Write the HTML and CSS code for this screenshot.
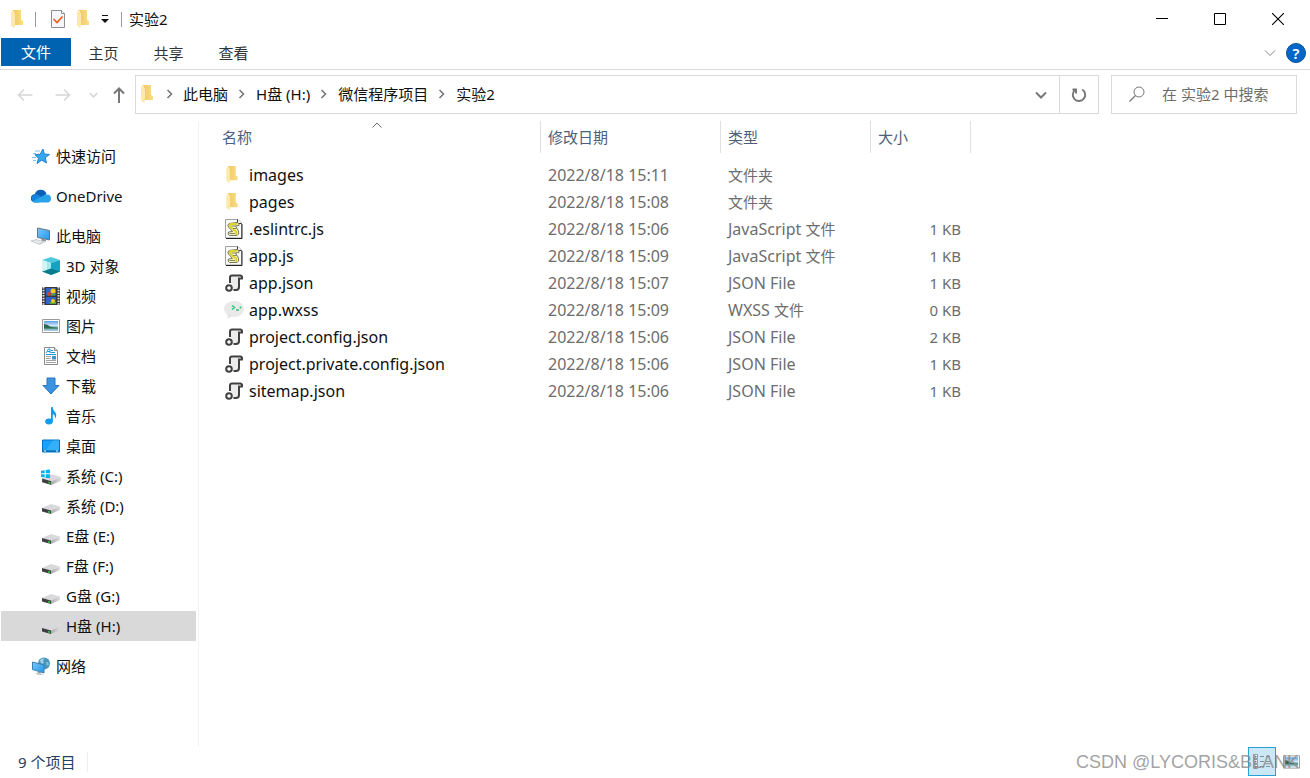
FILE: index.html
```html
<!DOCTYPE html>
<html lang="zh-CN">
<head>
<meta charset="utf-8">
<title>实验2</title>
<link rel="stylesheet" href="styles.css">
</head>
<body>
<svg class="sprite" aria-hidden="true">
  <defs>
    <linearGradient id="gFolder" x1="0" x2="1"><stop offset="0" stop-color="#f0c75f"/><stop offset="1" stop-color="#f9dc8a"/></linearGradient>
    <linearGradient id="gSky" x1="0" y1="0" x2="0" y2="1"><stop offset="0" stop-color="#5a9ee0"/><stop offset=".5" stop-color="#dceefb"/><stop offset=".6" stop-color="#5f9c94"/><stop offset="1" stop-color="#a9cfe6"/></linearGradient>
    <linearGradient id="gScreen" x1="0" y1="0" x2="1" y2="1"><stop offset="0" stop-color="#7cc8ff"/><stop offset="1" stop-color="#1f97ea"/></linearGradient>
    <linearGradient id="gDrive" x1="0" x2="1"><stop offset="0" stop-color="#a9abae"/><stop offset="1" stop-color="#dcdcde"/></linearGradient>
  </defs>
  <symbol id="folder" viewBox="0 0 12 18">
    <path d="M1 0H10V10L12 11V15H3V2Z" fill="url(#gFolder)"/>
    <path d="M0 1L3 2.600Q4 3 4 4V15Q4 17 3 18L0 15.500Z" fill="#ffe9a6"/>
  </symbol>
  <symbol id="check" viewBox="0 0 14 18">
    <path d="M.5.500H10.500L13.500 3.500V17.500H.5Z" fill="#f4f6f9" stroke="#8e8e8e"/>
    <path d="M10.500.500V3.500H13.500" fill="#fff" stroke="#8e8e8e"/>
    <path d="M2.500 9L6 12.500L11.500 6.500" fill="none" stroke="#f05a1a" stroke-width="1.700"/>
  </symbol>
  <symbol id="chev-r" viewBox="0 0 7 10"><path d="M1.500 1L5.500 5L1.500 9" fill="none" stroke="#777" stroke-width="1.600"/></symbol>
  <symbol id="chev-d" viewBox="0 0 12 8"><path d="M1 1.500L6 6.500L11 1.500" fill="none" stroke="currentColor" stroke-width="var(--w,1)"/></symbol>
  <symbol id="arrow" viewBox="0 0 16 14"><path d="M15.500 7H1.500M7 1.500L1.500 7L7 12.500" fill="none" stroke="currentColor" stroke-width="1.500"/></symbol>
  <symbol id="star" viewBox="0 0 18 18">
    <path d="M11 2L12.300 7L17.500 7.500L13.300 10.700L14.500 16L9.800 13.200L5 16.500L6.500 11.300L3 7.700L8.200 7.200Z" fill="#35a7f0" stroke="#1878c4" stroke-width=".9"/>
    <path d="M3 4H8M1 6.500H4M0 10.500H4M1 13.500H4" stroke="#7fc3ee" stroke-width="1"/>
  </symbol>
  <symbol id="cloud" viewBox="0 0 20 14">
    <path d="M4 13.500A4 4 0 0 1 3.800 5.200A6.200 6.200 0 0 1 15.500 4.800L11 9Z" fill="#0a5fb8"/>
    <path d="M4 13.500A4.200 4.200 0 1 1 6.500 5.500L12.500 9L8 13.500Z" fill="#1483dd"/>
    <path d="M4 13.500Q2.500 13.500 1.500 12.500L12.500 6.500A4.500 4.500 0 0 1 16 5.500A4 4 0 0 1 16 13.500Z" fill="#28a3ea"/>
  </symbol>
  <symbol id="pc" viewBox="0 0 20 18">
    <path d="M6.500 1L18.500 3.500V13L6.500 10.500Z" fill="url(#gScreen)" stroke="#667785"/>
    <path d="M11 11.500L15 12.500V14.500L10 13.500Z" fill="#8b949b"/>
    <path d="M0 14L5 12.500L13.500 15L8.500 17.500Z" fill="#d5d9dd" stroke="#a9afb5" stroke-width=".5"/>
    <path d="M2.500 14L9 16M5 13.500L11 15.200" stroke="#fff" stroke-width=".6"/>
  </symbol>
  <symbol id="cube" viewBox="0 0 18 18">
    <path d="M9 0L18 3L9 6L0 3Z" fill="#4cc9dc"/><path d="M0 3L9 6V18L0 14.500Z" fill="#a9e8ed"/><path d="M18 3L9 6V18L18 14.500Z" fill="#12a2c2"/>
    <path d="M0 14.500L9 11.500L18 14.500L9 18Z" fill="#087b8d"/><path d="M0 3L5 4.700V12.800L0 14.500Z" fill="#d1f4f4"/>
  </symbol>
  <symbol id="video" viewBox="0 0 18 18">
    <path d="M0 0H18V18H0Z" fill="#383838"/><path d="M1.500 0V18M16.500 0V18" stroke="#e2e2e2" stroke-width="2" stroke-dasharray="1.500 1.200"/>
    <path d="M4 1H14V8.500H4ZM4 10H14V17H4Z" fill="#3162c8"/><circle cx="11" cy="4" r="2.500" fill="#f6c71c"/><circle cx="7" cy="7" r="2" fill="#d64425"/><path d="M9 7H13V8.500H9ZM7 15H14V17H8Z" fill="#54a636"/><circle cx="11" cy="14" r="2" fill="#f6c71c"/>
  </symbol>
  <symbol id="picture" viewBox="0 0 18 14">
    <path d="M.5.500H17.500V13.500H.5Z" fill="#fff" stroke="#9b9b9b"/><path d="M2 2H16V12H2Z" fill="url(#gSky)"/><path d="M2 5Q5 5 9 8L16 9V9.500H2Z" fill="#2c6b52"/>
  </symbol>
  <symbol id="doc" viewBox="0 0 14 18">
    <path d="M.5.500H10.500L13.500 3.500V17.500H.5Z" fill="#fff" stroke="#8b8b8b"/><path d="M10.500.500V3.500H13.500" fill="#ddd" stroke="#8b8b8b"/>
    <path d="M2 6L4.500 2H6V6M3.500 4.500H6M7 3.500H9M7 5.500H11" stroke="#1996da" fill="none"/><path d="M2 7.500H12" stroke="#1996da"/><path d="M2 9.500H7M2 11.500H7M2 13.500H12M2 15.500H12" stroke="#a2a2a2"/><path d="M8 9H12V12.500H8Z" fill="#3b91ca"/>
  </symbol>
  <symbol id="download" viewBox="0 0 18 18"><path d="M5 1H13V8.500H17L9 17L1 8.500H5Z" fill="#3b93e2" stroke="#2878c3"/></symbol>
  <symbol id="music" viewBox="0 0 12 18">
    <ellipse cx="4" cy="14.500" rx="3.800" ry="3" fill="#0c9cf0"/><path d="M6 0H7.500Q8 3 10 5Q12.500 7.500 10 12Q10.500 8 7.800 7V14.500H6Z" fill="#0c9cf0"/>
  </symbol>
  <symbol id="desktop" viewBox="0 0 18 13">
    <path d="M.5.500H17.500V12.500H.5Z" fill="#18a1f7" stroke="#0873bd"/><path d="M11 1H17V10.500H4Z" fill="#35aff9"/><path d="M1 11H17V12H1Z" fill="#075e9e"/><path d="M2 11.500H4M14 11.500H16" stroke="#fff"/>
  </symbol>
  <symbol id="drive" viewBox="0 0 18 10">
    <path d="M0 4L9 0L18 2.500L9 6.500Z" fill="#d9d9dc"/><path d="M0 4L9 6.500V10L0 7.500Z" fill="#3d3f40"/><path d="M18 2.500L9 6.500V10L18 6Z" fill="url(#gDrive)"/><path d="M6 7L8 7.600V9L6 8.400Z" fill="#35d03f"/>
  </symbol>
  <symbol id="windrive" viewBox="0 0 19 15">
    <use href="#drive" x="1" y="5" width="18" height="10"/>
    <path d="M0 1.500L3.500 1V4H0ZM4.500.900L8.500.300V4H4.500ZM0 5H3.500V8L0 7.500ZM4.500 5H8.500V8.700L4.500 8.100Z" fill="#00b0ef"/>
  </symbol>
  <symbol id="network" viewBox="0 0 18 18">
    <circle cx="12" cy="6.500" r="6" fill="#4796bd"/><path d="M8 3Q10 1 12.500 1.500L11 4L12 6L9 6.500Z" fill="#a4d3e6"/><path d="M14.500 4.500L16.500 5.500V8.500L14.500 8Z" fill="#8cc3db"/>
    <path d="M.5 5L12 8V16L.5 12.500Z" fill="url(#gScreen)" stroke="#3c81ad"/><path d="M6 14.500L9 15.500V17H5Z" fill="#8f999e"/><path d="M3 16.500L8 16L12 18H6Z" fill="#c9cdd0"/>
  </symbol>
  <symbol id="js" viewBox="0 0 18 20">
    <path d="M.5.500H13L16.500 4V19H.5Z" fill="#fafafa" stroke="#a0a0a0"/><path d="M1 19.500H17V5" fill="none" stroke="#222"/><path d="M12.500.500V4.500H16.500" fill="#fff" stroke="#333"/>
    <path d="M4 4.500L12 3.500Q15 4 14 6.500L10.500 7L13.500 12Q14.500 15.500 12 16.500H4.500Q2 15.500 3.500 13L7.500 12.500L3.500 8Q2 6 4 4.500Z" fill="#f3f0bd" stroke="#77775c" stroke-width="1"/>
    <path d="M12 5H5.500Q4 6.500 6 8.500L11 12.500Q12 14.500 10.500 15.500" fill="none" stroke="#dcd52e" stroke-width="2"/>
    <path d="M6.500 7H10.500M8 9.500H11.500M4.500 14.500H10" stroke="#6d6d52" stroke-width=".8"/>
  </symbol>
  <symbol id="json" viewBox="0 0 18 18">
    <path d="M5 9V3.500Q5 1.500 7 1.500H14V13Q14 16 11 16H6V9Z" fill="#ececec"/>
    <path d="M5 9V3.500Q5 1.500 7 1.500H15.500Q17.500 2 17 4.500H14V13Q14 16 11 16H8.500" fill="none" stroke="#414141" stroke-width="2"/>
    <circle cx="4" cy="14" r="2.800" fill="#fff" stroke="#414141" stroke-width="2"/>
  </symbol>
  <symbol id="wxss" viewBox="0 0 20 18">
    <ellipse cx="10" cy="8" rx="10" ry="8" fill="#e9e9e9"/><path d="M4 13L3.500 17.500L8 15Z" fill="#e1e1e1"/>
    <path d="M8 4.500L10.500 6.500L8 8.500M12 9H15M16.500 5.500V7.500" fill="none" stroke="#2ac47a" stroke-width="1.500"/>
  </symbol>
  <symbol id="details" viewBox="0 0 18 16">
    <path d="M.5.500H4.500V4.500H.5ZM.5 5.500H4.500V9.500H.5ZM.5 10.500H4.500V14.500H.5Z" fill="#fff" stroke="#8e9ba3"/>
    <path d="M2 2H3.500V3.500H2Z" fill="#2577b5"/><path d="M2 7H3.500V8.500H2Z" fill="#be6a2c"/><path d="M2 12H3.500V13.500H2Z" fill="#a11"/>
    <path d="M7 2.500H11M13 2.500H17M7 7.500H11M13 7.500H17M7 12.500H11M13 12.500H17" stroke="#7f919c"/>
  </symbol>
</svg>

<header class="titlebar">
  <div class="quick-tools">
    <svg class="i-folder"><use href="#folder"/></svg>
    <span class="divider"></span>
    <button class="plain" aria-label="属性"><svg class="i-page"><use href="#check"/></svg></button>
    <button class="plain" aria-label="新建文件夹"><svg class="i-folder"><use href="#folder"/></svg></button>
    <button class="plain" aria-label="自定义快速访问工具栏"><svg class="i-more" viewBox="0 0 8 8"><path d="M1 .500H7" stroke="#111"/><path d="M0 4H8L4 8Z" fill="#111"/></svg></button>
    <span class="divider"></span>
  </div>
  <h1 class="title">实验2</h1>
  <div class="window-buttons">
    <button class="plain window-button" aria-label="最小化"><svg class="i-win" viewBox="0 0 12 12"><path d="M0 5.500H12" stroke="#000"/></svg></button>
    <button class="plain window-button" aria-label="最大化"><svg class="i-win" viewBox="0 0 12 12"><path d="M.5.500H11.500V11.500H.5Z" fill="none" stroke="#000"/></svg></button>
    <button class="plain window-button" aria-label="关闭"><svg class="i-win" viewBox="0 0 12 12"><path d="M0 0L12 12M12 0L0 12" stroke="#000" stroke-width="1.100"/></svg></button>
  </div>
</header>

<nav class="ribbon" aria-label="功能区">
  <button class="tab tab-file">文件</button>
  <button class="tab">主页</button>
  <button class="tab">共享</button>
  <button class="tab">查看</button>
  <div class="ribbon-end">
    <button class="plain expand" aria-label="展开功能区"><svg class="i-chev"><use href="#chev-d"/></svg></button>
    <button class="plain help" aria-label="帮助">?</button>
  </div>
</nav>

<div class="navbar">
  <div class="history">
    <button class="plain faint" aria-label="后退"><svg class="i-arrow"><use href="#arrow"/></svg></button>
    <button class="plain faint" aria-label="前进"><svg class="i-arrow i-forward"><use href="#arrow"/></svg></button>
    <button class="plain faint" aria-label="最近位置"><svg class="i-recent"><use href="#chev-d"/></svg></button>
    <button class="plain up" aria-label="上移"><svg class="i-up" viewBox="0 0 12 16"><path d="M6 16V1.500M1 6.500L6 1.500L11 6.500" fill="none" stroke="currentColor" stroke-width="2"/></svg></button>
  </div>
  <div class="address">
    <div class="crumbs">
      <svg class="i-folder"><use href="#folder"/></svg>
      <svg class="i-crumb"><use href="#chev-r"/></svg>
      <button class="plain">此电脑</button>
      <svg class="i-crumb"><use href="#chev-r"/></svg>
      <button class="plain">H盘 (H:)</button>
      <svg class="i-crumb"><use href="#chev-r"/></svg>
      <button class="plain">微信程序项目</button>
      <svg class="i-crumb"><use href="#chev-r"/></svg>
      <button class="plain">实验2</button>
    </div>
    <button class="plain address-drop" aria-label="以前的位置"><svg class="i-chev"><use href="#chev-d"/></svg></button>
    <button class="plain refresh" aria-label="刷新"><svg class="i-refresh" viewBox="0 0 16 16"><path d="M11.200 2.500A6.200 6.200 0 1 1 4.300 2.800M1.500 2.500H5V6.500" fill="none" stroke="#777" stroke-width="1.900"/></svg></button>
  </div>
  <label class="search">
    <svg class="i-search" viewBox="0 0 16 16"><circle cx="10" cy="6" r="5" fill="none" stroke="#777"/><path d="M6.500 9.500L.5 15.500" stroke="#777" stroke-width="1.200"/></svg>
    <input type="search" aria-label="搜索" placeholder="在 实验2 中搜索">
  </label>
</div>

<div class="body">
  <nav class="sidebar" aria-label="导航窗格">
    <a class="place root" href="#"><svg><use href="#star"/></svg>快速访问</a>
    <a class="place root" href="#"><svg class="wide"><use href="#cloud"/></svg>OneDrive</a>
    <div class="group">
      <a class="place root" href="#"><svg class="wide"><use href="#pc"/></svg>此电脑</a>
      <a class="place" href="#"><svg><use href="#cube"/></svg>3D 对象</a>
      <a class="place" href="#"><svg><use href="#video"/></svg>视频</a>
      <a class="place" href="#"><svg><use href="#picture"/></svg>图片</a>
      <a class="place" href="#"><svg><use href="#doc"/></svg>文档</a>
      <a class="place" href="#"><svg><use href="#download"/></svg>下载</a>
      <a class="place" href="#"><svg><use href="#music"/></svg>音乐</a>
      <a class="place" href="#"><svg><use href="#desktop"/></svg>桌面</a>
      <a class="place disk" href="#"><svg class="wide"><use href="#windrive"/></svg>系统 (C:)</a>
      <a class="place disk" href="#"><svg><use href="#drive"/></svg>系统 (D:)</a>
      <a class="place disk" href="#"><svg><use href="#drive"/></svg>E盘 (E:)</a>
      <a class="place disk" href="#"><svg><use href="#drive"/></svg>F盘 (F:)</a>
      <a class="place disk" href="#"><svg><use href="#drive"/></svg>G盘 (G:)</a>
      <a class="place disk current" href="#" aria-current="page"><svg><use href="#drive"/></svg>H盘 (H:)</a>
    </div>
    <a class="place root" href="#"><svg><use href="#network"/></svg>网络</a>
  </nav>

  <main class="files">
    <table>
      <colgroup><col class="c-name"><col class="c-date"><col class="c-type"><col class="c-size"></colgroup>
      <thead>
        <tr><th aria-sort="ascending">名称<svg class="sort" viewBox="0 0 10 6"><path d="M.5 5.500L5 1L9.500 5.500" fill="none" stroke="#666"/></svg></th><th>修改日期</th><th>类型</th><th>大小</th></tr>
      </thead>
      <tbody>
        <tr><td><div class="file"><svg class="i-dir"><use href="#folder"/></svg>images</div></td><td>2022/8/18 15:11</td><td><span class="han">文件夹</span></td><td></td></tr>
        <tr><td><div class="file"><svg class="i-dir"><use href="#folder"/></svg>pages</div></td><td>2022/8/18 15:08</td><td><span class="han">文件夹</span></td><td></td></tr>
        <tr><td><div class="file"><svg><use href="#js"/></svg>.eslintrc.js</div></td><td>2022/8/18 15:06</td><td>JavaScript <span class="han">文件</span></td><td>1 KB</td></tr>
        <tr><td><div class="file"><svg><use href="#js"/></svg>app.js</div></td><td>2022/8/18 15:09</td><td>JavaScript <span class="han">文件</span></td><td>1 KB</td></tr>
        <tr><td><div class="file"><svg class="i-json"><use href="#json"/></svg>app.json</div></td><td>2022/8/18 15:07</td><td>JSON File</td><td>1 KB</td></tr>
        <tr><td><div class="file"><svg><use href="#wxss"/></svg>app.wxss</div></td><td>2022/8/18 15:09</td><td>WXSS <span class="han">文件</span></td><td>0 KB</td></tr>
        <tr><td><div class="file"><svg class="i-json"><use href="#json"/></svg>project.config.json</div></td><td>2022/8/18 15:06</td><td>JSON File</td><td>2 KB</td></tr>
        <tr><td><div class="file"><svg class="i-json"><use href="#json"/></svg>project.private.config.json</div></td><td>2022/8/18 15:06</td><td>JSON File</td><td>1 KB</td></tr>
        <tr><td><div class="file"><svg class="i-json"><use href="#json"/></svg>sitemap.json</div></td><td>2022/8/18 15:06</td><td>JSON File</td><td>1 KB</td></tr>
      </tbody>
    </table>
  </main>
</div>

<footer class="status">
  <span class="count">9 个项目</span>
  <div class="views">
    <button class="plain view active" aria-label="详细信息"><svg class="i-details"><use href="#details"/></svg></button>
    <button class="plain view" aria-label="大图标"><svg class="i-thumbs"><use href="#picture"/></svg></button>
  </div>
  <span class="watermark">CSDN @LYCORIS&amp;BLANK</span>
</footer>
</body>
</html>
```
FILE: styles.css
```css
* { box-sizing: border-box; }

body {
  margin: 0;
  min-height: 100vh;
  display: flex;
  flex-direction: column;
  background: #fff;
  color: #111;
  font: 15px/20px "Noto Sans", "Noto Sans CJK SC", sans-serif;
}

svg { display: block; flex: none; }
.sprite { position: absolute; width: 0; height: 0; }

button, input { font: inherit; color: inherit; }

.plain {
  display: flex;
  align-items: center;
  justify-content: center;
  padding: 0;
  border: 0;
  background: none;
}

.i-folder { width: 12px; height: 18px; }
.i-page { width: 14px; height: 18px; }
.i-more { width: 8px; height: 8px; }
.i-win { width: 12px; height: 12px; }
.i-chev { width: 12px; height: 8px; }
.i-recent { width: 9px; height: 6px; --w: 2; }
.i-arrow { width: 16px; height: 14px; }
.i-forward { transform: scaleX(-1); }
.i-up { width: 12px; height: 16px; }
.i-crumb { width: 7px; height: 10px; }
.i-refresh { width: 16px; height: 16px; }
.i-search { width: 16px; height: 16px; }

/* title bar */
.titlebar { display: flex; align-items: center; height: 38px; padding: 0 3px 0 11px; }
.quick-tools { display: flex; align-items: center; gap: 12px; }
.divider { width: 1px; height: 15px; background: #999; }
.divider + .plain { margin-left: 3px; }
.title { margin: 0 0 0 7px; font-size: 15px; font-weight: 400; line-height: 20px; }
.window-buttons { display: flex; margin-left: auto; }
.window-button { width: 58px; height: 38px; }

/* ribbon */
.ribbon { display: flex; align-items: flex-start; height: 32px; padding-left: 1px; border-bottom: 1px solid #dadbdc; }
.tab { width: 65px; height: 28px; padding: 2px 0 0; border: 0; background: none; color: #333; }
.tab-file { width: 70px; padding: 0; background: #0063b1; color: #fff; }
.ribbon-end { display: flex; align-items: center; gap: 10px; height: 30px; margin-left: auto; padding-right: 4px; }
.expand { color: #888; }
.help { width: 20px; height: 20px; border: 1px solid #04508f; border-radius: 50%; background: #0067c8; color: #fff; font-weight: 600; }

/* address row */
.navbar { display: flex; align-items: center; height: 49px; padding: 0 13px 0 17px; }
.history { display: flex; align-items: center; width: 118px; color: #666; }
.history .plain:nth-child(2) { margin-left: 22px; }
.history .plain:nth-child(3) { margin-left: 18px; }
.history .plain { padding-top: 1px; }
.faint { color: #d6d6d6; }
.up { margin-left: 15px; color: #777; }
.address { display: flex; flex: 1; height: 39px; border: 1px solid #d9d9d9; }
.crumbs { display: flex; align-items: center; flex: 1; gap: 10px; padding: 0 0 2px 5px; white-space: nowrap; }
.crumbs .i-folder { margin-right: 3px; }
.crumbs .i-crumb { margin-right: 1px; }
.crumbs .i-folder + .i-crumb { margin-right: 0; }
.address-drop { width: 36px; color: #777; --w: 2; }
.refresh { width: 39px; border-left: 1px solid #d9d9d9; }
.search { display: flex; align-items: center; gap: 17px; width: 186px; height: 39px; margin-left: 12px; padding: 0 0 2px 17px; border: 1px solid #d9d9d9; }
.search input { flex: 1; min-width: 0; padding: 0; border: 0; outline: 0; background: none; }
.search input::placeholder { color: #6d6d6d; opacity: 1; }

/* main area */
.body { display: flex; flex: 1; padding-top: 2px; }
.sidebar { display: flex; flex-direction: column; gap: 10px; width: 199px; padding: 20px 2px 0 1px; border-right: 1px solid #f2f2f2; }
.place { display: flex; align-items: center; gap: 6px; height: 30px; padding-left: 41px; color: #111; text-decoration: none; white-space: nowrap; }
.place svg { width: 18px; height: 18px; }
.place .wide { width: 20px; margin-left: -1px; margin-right: -1px; }
.root { padding-left: 31px; }
.disk svg { margin-top: 6px; }
.disk .wide { margin-top: 2px; }
.current { background: #d9d9d9; }

.files { flex: 1; min-width: 0; padding-left: 15px; }
table { table-layout: fixed; width: 757px; border-collapse: separate; border-spacing: 0; }
.c-name { width: 327px; }
.c-date { width: 180px; }
.c-type { width: 150px; }
.c-size { width: 100px; }
th { position: relative; height: 32px; padding: 0 7px; border-right: 1px solid #e0e0e0; color: #4c607a; font-weight: 400; text-align: left; }
tbody::before { content: ""; display: block; height: 8px; }
td { height: 27px; padding: 0 7px; color: #6d6d6d; font-size: 16px; white-space: nowrap; }
td:last-child { padding-right: 10px; font-size: 15px; text-align: right; }
th:first-child { padding-left: 8px; }
td:first-child { padding-left: 10px; color: #111; }
.han { font-size: 15px; }
.sort { position: absolute; top: 1px; left: 50%; width: 10px; height: 6px; margin-left: -5px; }
.file { display: flex; align-items: center; gap: 5px; }
.file svg { width: 20px; height: 20px; }
.file .i-dir { width: 16px; height: 17px; margin-right: 4px; }
.file .i-json { width: 18px; height: 18px; margin: 0 1px; }

/* status bar */
.status { position: relative; display: flex; align-items: center; height: 31px; padding: 0 5px 2px 18px; color: #24405f; }
.count { padding-right: 12px; border-right: 1px solid #eee; }
.views { display: flex; gap: 1px; margin-left: auto; }
.view { width: 28px; height: 29px; }
.active { border: 1px solid #2aa0da; background: #cbe8f6; }
.i-details { width: 18px; height: 16px; }
.i-thumbs { width: 17px; height: 14px; }
.watermark { position: absolute; right: 11px; bottom: 6px; color: #8a8a8acc; font: 18px/20px "Liberation Sans", sans-serif; pointer-events: none; }
```
